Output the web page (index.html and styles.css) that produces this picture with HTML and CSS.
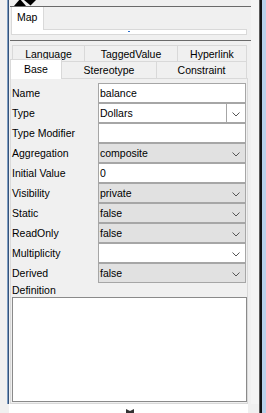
FILE: index.html
```html
<!DOCTYPE html>
<html lang="en">
<head>
    <meta charset="UTF-8">
    <title>Attribute Properties</title>
    <link rel="stylesheet" href="styles.css">
</head>
<body>
    <div class="window">
        <div class="frame">
            <div class="upper">
                <div class="gutter"></div>
                <div class="edge-blue"></div>
                <div class="content">
                    <div class="arrows">
                        <svg width="22" height="6" viewBox="0 0 22 6">
                            <polygon points="0,6 12,6 6,-1" fill="#000"/>
                            <polygon points="10,0 22,0 16.5,5.5" fill="#000"/>
                        </svg>
                    </div>
                    <div class="rule"></div>

                    <!-- Map tab strip -->
                    <div class="map-block">
                        <div class="map-tabs">
                            <div class="map-tab">Map</div>
                        </div>
                        <div class="map-page"><span class="focus-mark"></span></div>
                    </div>
                    <div class="rule"></div>

                    <!-- Property tabs -->
                    <div class="props">
                        <div class="tab-row back">
                            <div class="tab t-language">Language</div>
                            <div class="tab t-tagged">TaggedValue</div>
                            <div class="tab t-hyper">Hyperlink</div>
                        </div>
                        <div class="tab-row front">
                            <div class="tab selected t-base">Base</div>
                            <div class="tab t-stereo">Stereotype</div>
                            <div class="tab t-constraint">Constraint</div>
                        </div>
                        <div class="tab-page">
                            <div class="form">
                                <div class="lbl">Name</div>
                                <div class="field"><span class="val">balance</span></div>

                                <div class="lbl">Type</div>
                                <div class="field combo edit"><span class="val">Dollars</span><span class="btn split"><svg width="8" height="5" viewBox="0 0 8 5"><polyline points="0.5,0.5 4,4 7.5,0.5" fill="none" stroke="#555" stroke-width="1"/></svg></span></div>

                                <div class="lbl">Type Modifier</div>
                                <div class="field"><span class="val"></span></div>

                                <div class="lbl">Aggregation</div>
                                <div class="field combo"><span class="val">composite</span><span class="btn"><svg width="8" height="5" viewBox="0 0 8 5"><polyline points="0.5,0.5 4,4 7.5,0.5" fill="none" stroke="#555" stroke-width="1"/></svg></span></div>

                                <div class="lbl">Initial Value</div>
                                <div class="field"><span class="val">0</span></div>

                                <div class="lbl">Visibility</div>
                                <div class="field combo"><span class="val">private</span><span class="btn"><svg width="8" height="5" viewBox="0 0 8 5"><polyline points="0.5,0.5 4,4 7.5,0.5" fill="none" stroke="#555" stroke-width="1"/></svg></span></div>

                                <div class="lbl">Static</div>
                                <div class="field combo"><span class="val">false</span><span class="btn"><svg width="8" height="5" viewBox="0 0 8 5"><polyline points="0.5,0.5 4,4 7.5,0.5" fill="none" stroke="#555" stroke-width="1"/></svg></span></div>

                                <div class="lbl">ReadOnly</div>
                                <div class="field combo"><span class="val">false</span><span class="btn"><svg width="8" height="5" viewBox="0 0 8 5"><polyline points="0.5,0.5 4,4 7.5,0.5" fill="none" stroke="#555" stroke-width="1"/></svg></span></div>

                                <div class="lbl">Multiplicity</div>
                                <div class="field combo edit"><span class="val"></span><span class="btn"><svg width="8" height="5" viewBox="0 0 8 5"><polyline points="0.5,0.5 4,4 7.5,0.5" fill="none" stroke="#555" stroke-width="1"/></svg></span></div>

                                <div class="lbl">Derived</div>
                                <div class="field combo"><span class="val">false</span><span class="btn"><svg width="8" height="5" viewBox="0 0 8 5"><polyline points="0.5,0.5 4,4 7.5,0.5" fill="none" stroke="#555" stroke-width="1"/></svg></span></div>
                            </div>
                            <div class="def-label">Definition</div>
                            <div class="def-box"></div>
                        </div>
                    </div>
                </div>
                <div class="side"></div>
            </div>
            <div class="footer">
                <div class="foot-gap"></div>
                <div class="foot-white">
                    <svg width="8" height="4" viewBox="0 0 8 4">
                        <polygon points="0,0 4,2 8,0 8,4 0,4" fill="#333"/>
                    </svg>
                </div>
            </div>
        </div>
        <div class="edge-dark"></div>
        <div class="edge-light"></div>
    </div>
</body>
</html>
```

FILE: styles.css
```css
body {
    margin: 0;
    background-color: #f0f0f0;
    font-family: 'Liberation Sans', Arial, sans-serif;
    font-size: 10.5px;
    color: #000;
    overflow: hidden;
}
.window {
    display: flex;
    width: 266px;
    height: 413px;
}
.frame {
    display: flex;
    flex-direction: column;
    width: 259px;
}
.upper {
    display: flex;
    height: 404px;
}
.gutter {
    width: 7px;
}
.edge-blue {
    width: 2px;
    background: linear-gradient(to right, #7c9cc2 50%, #34527a 50%);
}
.content {
    width: 242px;
    display: flex;
    flex-direction: column;
}
.side {
    width: 8px;
    background-color: #f4f4f4;
}
.edge-dark {
    width: 3px;
    background-color: #111;
    border-left: 1px solid #5a5a5a;
    box-sizing: border-box;
}
.edge-light {
    width: 4px;
    background-color: #b9d1ea;
}

/* top arrows + rules */
.arrows {
    height: 6px;
    padding-left: 5px;
    overflow: hidden;
}
.arrows svg {
    display: block;
}
.rule {
    height: 1px;
    margin-left: 1px;
    background-color: #6a6a6a;
}

/* Map strip */
.map-block {
    height: 33px;
    padding-left: 2px;
    box-sizing: border-box;
}
.map-tabs {
    display: flex;
    height: 22px;
}
.map-tab {
    position: relative;
    z-index: 1;
    width: 33px;
    height: 23px;
    box-sizing: border-box;
    background-color: #fff;
    border-left: 1px solid #d9d9d9;
    border-right: 1px solid #d9d9d9;
    padding: 3px 0 0 5px;
    line-height: 14px;
}
.map-page {
    width: 236px;
    height: 6px;
    box-sizing: border-box;
    background-color: #fff;
    border: 1px solid #d9d9d9;
    display: flex;
    justify-content: center;
}
.focus-mark {
    width: 2px;
    height: 1px;
    margin-top: 1px;
    background-color: #2a6fd0;
}

/* Property tabs */
.props {
    padding-top: 4px;
}
.tab-row {
    display: flex;
}
.tab-row.back {
    height: 16px;
    padding-left: 3px;
}
.tab-row.front {
    height: 17px;
    padding-left: 1px;
    align-items: flex-end;
}
.tab {
    box-sizing: border-box;
    background-color: #f0f0f0;
    border-top: 1px solid #d9d9d9;
    border-right: 1px solid #d9d9d9;
    text-align: center;
    line-height: 15px;
    white-space: nowrap;
}
.back .tab {
    height: 16px;
    padding-top: 1px;
}
.front .tab {
    height: 17px;
    padding-top: 1px;
}
.t-language { width: 73px; border-left: 1px solid #d9d9d9; }
.t-tagged { width: 93px; }
.t-hyper { width: 69px; }
.t-stereo { width: 95px; }
.t-constraint { width: 90px; }
.front .tab.selected {
    position: relative;
    z-index: 1;
    width: 52px;
    height: 20px;
    margin-bottom: -1px;
    padding-top: 2px;
    background-color: #fff;
    border-left: 1px solid #d9d9d9;
}
.tab-page {
    width: 238px;
    height: 326px;
    margin-left: 1px;
    box-sizing: border-box;
    border: 1px solid #d9d9d9;
    background-color: #f0f0f0;
}

/* form grid */
.form {
    display: grid;
    grid-template-columns: 87px 148px;
    grid-auto-rows: 20px;
    padding-top: 4px;
}
.lbl {
    padding-left: 1px;
    line-height: 20px;
    white-space: nowrap;
}
.field {
    display: flex;
    height: 20px;
    box-sizing: border-box;
    border: 1px solid #a6a6a6;
    background-color: #fff;
    line-height: 18px;
}
.field .val {
    flex: 1;
    padding-left: 1px;
    overflow: hidden;
    white-space: nowrap;
}
.field.combo {
    background-color: #e1e1e1;
}
.field.combo.edit {
    background-color: #fff;
}
.btn {
    width: 18px;
    display: flex;
    justify-content: center;
    align-items: center;
    padding-top: 3px;
    box-sizing: border-box;
}
.btn svg {
    display: block;
}
.btn.split {
    width: 19px;
    border-left: 1px solid #a6a6a6;
}
.def-label {
    height: 14px;
    padding-left: 1px;
    line-height: 14px;
}
.def-box {
    width: 235px;
    height: 105px;
    margin-left: 1px;
    box-sizing: border-box;
    border: 1px solid #8a8a8a;
    background-color: #fff;
}

/* bottom strip */
.footer {
    display: flex;
    height: 9px;
}
.foot-gap {
    width: 9px;
}
.foot-white {
    width: 239px;
    display: flex;
    justify-content: center;
    align-items: flex-end;
    padding-left: 3px;
    box-sizing: border-box;
    background-color: #fff;
}
.foot-white svg {
    display: block;
}
```
